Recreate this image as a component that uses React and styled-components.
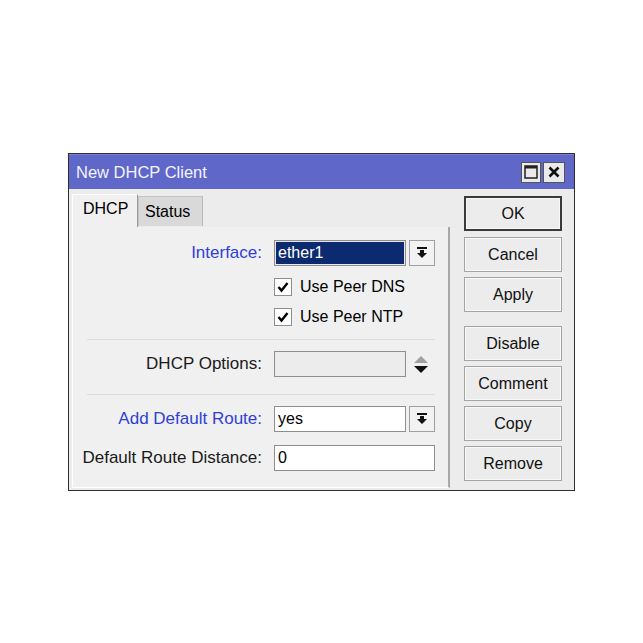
import React from "react";
import styled, { createGlobalStyle } from "styled-components";

const GlobalStyle = createGlobalStyle`
  html, body {
    margin: 0;
    padding: 0;
    background: #ffffff;
    font-family: "Liberation Sans", Arial, sans-serif;
  }
`;

const Page = styled.div`
  width: 643px;
  height: 643px;
  padding: 153px 0 0 68px;
  box-sizing: border-box;
`;

const Window = styled.div`
  width: 507px;
  height: 338px;
  box-sizing: border-box;
  border: 1px solid #2e2e2e;
  background: #ececec;
  display: flex;
  flex-direction: column;
`;

const TitleBar = styled.div`
  height: 35px;
  background: #5f67c9;
  display: flex;
  align-items: center;
  padding: 0 9px 0 7px;
  border-top: 1px solid #7a80d4;
  box-sizing: border-box;
`;

const Title = styled.div`
  flex: 1;
  color: #f4f4ff;
  font-size: 16.5px;
  padding-top: 1px;
`;

const TitleButton = styled.div`
  width: ${(p) => p.w}px;
  height: 21px;
  box-sizing: border-box;
  background: #eaeaea;
  border: 1px solid #555;
  margin-left: 2px;
  display: flex;
  align-items: center;
  justify-content: center;
`;

const Body = styled.div`
  flex: 1;
  display: flex;
  padding: 5px 12px 2px 3px;
`;

const LeftCol = styled.div`
  width: 378px;
  display: flex;
  flex-direction: column;
`;

const Tabs = styled.div`
  height: 33px;
  display: flex;
  align-items: flex-end;
`;

const Tab = styled.div`
  box-sizing: border-box;
  height: ${(p) => (p.active ? "33px" : "30px")};
  width: ${(p) => p.w}px;
  background: ${(p) => (p.active ? "#f0f0f0" : "#d9d9d9")};
  border-top: 1px solid ${(p) => (p.active ? "#ffffff" : "#c4c4c4")};
  border-left: 1px solid ${(p) => (p.active ? "#ffffff" : "#c4c4c4")};
  border-right: 1px solid ${(p) => (p.active ? "#9a9a9a" : "#b8b8b8")};
  margin-bottom: ${(p) => (p.active ? "0" : "1px")};
  font-size: 16px;
  color: #000;
  display: flex;
  align-items: center;
  padding-left: ${(p) => (p.active ? "10px" : "6px")};
  padding-bottom: ${(p) => (p.active ? "4px" : "0")};
`;

const Panel = styled.div`
  flex: 1;
  background: #f0f0f0;
  border-left: 1px solid #ffffff;
  border-bottom: 1px solid #ffffff;
  border-right: 2px solid #a8a8a8;
  padding: 13px 0 0 0;
  display: flex;
  flex-direction: column;
`;

const Row = styled.div`
  display: flex;
  align-items: center;
  height: 26px;
  margin-top: ${(p) => p.mt || 0}px;
`;

const Label = styled.div`
  width: 201px;
  flex-shrink: 0;
  box-sizing: border-box;
  text-align: right;
  padding-right: 12px;
  font-size: 17px;
  color: ${(p) => (p.blue ? "#2f3fd6" : "#1a1a1a")};
  white-space: nowrap;
`;

const Input = styled.div`
  box-sizing: border-box;
  width: ${(p) => p.w || 132}px;
  height: 26px;
  border: 1px solid #8e8e8e;
  background: ${(p) => (p.disabled ? "#ececec" : p.selected ? "#0b2a6f" : "#ffffff")};
  box-shadow: inset 0 0 0 1px ${(p) => (p.selected ? "#e8e8e8" : "transparent")};
  color: ${(p) => (p.selected ? "#ffffff" : "#000")};
  font-size: 16px;
  padding-left: 3px;
  display: flex;
  align-items: center;
`;

const DropButton = styled.div`
  box-sizing: border-box;
  width: 26px;
  height: 26px;
  margin-left: 3px;
  border: 1px solid #a0a0a0;
  background: #f2f2f2;
  display: flex;
  align-items: center;
  justify-content: center;
`;

const Spinner = styled.div`
  margin-left: 8px;
  display: flex;
  flex-direction: column;
  gap: 3px;
`;

const CheckRow = styled.div`
  display: flex;
  align-items: center;
  height: 18px;
  margin-top: ${(p) => p.mt}px;
  padding-left: 201px;
  font-size: 16px;
`;

const Box = styled.div`
  box-sizing: border-box;
  width: 18px;
  height: 18px;
  border: 1px solid #8e8e8e;
  background: #fff;
  margin-right: 8px;
  display: flex;
  align-items: center;
  justify-content: center;
`;

const Separator = styled.div`
  height: 1px;
  background: #dcdcdc;
  margin: ${(p) => p.mt}px 13px 0 14px;
`;

const ButtonCol = styled.div`
  margin-left: 14px;
  padding-top: 2px;
  display: flex;
  flex-direction: column;
`;

const Button = styled.div`
  box-sizing: border-box;
  width: 98px;
  height: 35px;
  margin-top: ${(p) => p.mt || 0}px;
  border: ${(p) => (p.primary ? "2px solid #3a3a3a" : "1px solid #a3a3a3")};
  background: #ececec;
  box-shadow: inset 0 0 0 1px #f8f8f8;
  font-size: 16px;
  color: #111;
  display: flex;
  align-items: center;
  justify-content: center;
`;

const DropIcon = () => (
  <svg width="12" height="12" viewBox="0 0 12 12">
    <rect x="1" y="0" width="10" height="2" fill="#111" />
    <path d="M4 3 H8 V6 H11 L6 11 L1 6 H4 Z" fill="#111" />
  </svg>
);

const Check = () => (
  <svg width="12" height="12" viewBox="0 0 12 12">
    <path d="M1.5 6 L4.5 9.5 L10.5 2" stroke="#000" strokeWidth="2.4" fill="none" />
  </svg>
);

export default function App() {
  return (
    <Page>
      <GlobalStyle />
      <Window>
        <TitleBar>
          <Title>New DHCP Client</Title>
          <TitleButton w={20}>
            <svg width="14" height="14" viewBox="0 0 14 14">
              <rect x="1" y="1" width="12" height="12" fill="none" stroke="#222" strokeWidth="1.5" />
              <rect x="1" y="1" width="12" height="2.5" fill="#222" />
            </svg>
          </TitleButton>
          <TitleButton w={22}>
            <svg width="12" height="12" viewBox="0 0 12 12">
              <path d="M1.5 1.5 L10.5 10.5 M10.5 1.5 L1.5 10.5" stroke="#111" strokeWidth="2.6" />
            </svg>
          </TitleButton>
        </TitleBar>
        <Body>
          <LeftCol>
            <Tabs>
              <Tab active w={66}>DHCP</Tab>
              <Tab w={65}>Status</Tab>
            </Tabs>
            <Panel>
              <Row>
                <Label blue>Interface:</Label>
                <Input selected>ether1</Input>
                <DropButton>
                  <DropIcon />
                </DropButton>
              </Row>
              <CheckRow mt={12}>
                <Box>
                  <Check />
                </Box>
                Use Peer DNS
              </CheckRow>
              <CheckRow mt={12}>
                <Box>
                  <Check />
                </Box>
                Use Peer NTP
              </CheckRow>
              <Separator mt={13} />
              <Row mt={11}>
                <Label>DHCP Options:</Label>
                <Input disabled />
                <Spinner>
                  <svg width="14" height="7" viewBox="0 0 14 7">
                    <path d="M7 0 L14 7 H0 Z" fill="#a0a0a0" />
                  </svg>
                  <svg width="14" height="7" viewBox="0 0 14 7">
                    <path d="M0 0 H14 L7 7 Z" fill="#111" />
                  </svg>
                </Spinner>
              </Row>
              <Separator mt={17} />
              <Row mt={11}>
                <Label blue>Add Default Route:</Label>
                <Input>yes</Input>
                <DropButton>
                  <DropIcon />
                </DropButton>
              </Row>
              <Row mt={13}>
                <Label>Default Route Distance:</Label>
                <Input w={161}>0</Input>
              </Row>
            </Panel>
          </LeftCol>
          <ButtonCol>
            <Button primary>OK</Button>
            <Button mt={6}>Cancel</Button>
            <Button mt={5}>Apply</Button>
            <Button mt={14}>Disable</Button>
            <Button mt={5}>Comment</Button>
            <Button mt={5}>Copy</Button>
            <Button mt={5}>Remove</Button>
          </ButtonCol>
        </Body>
      </Window>
    </Page>
  );
}
